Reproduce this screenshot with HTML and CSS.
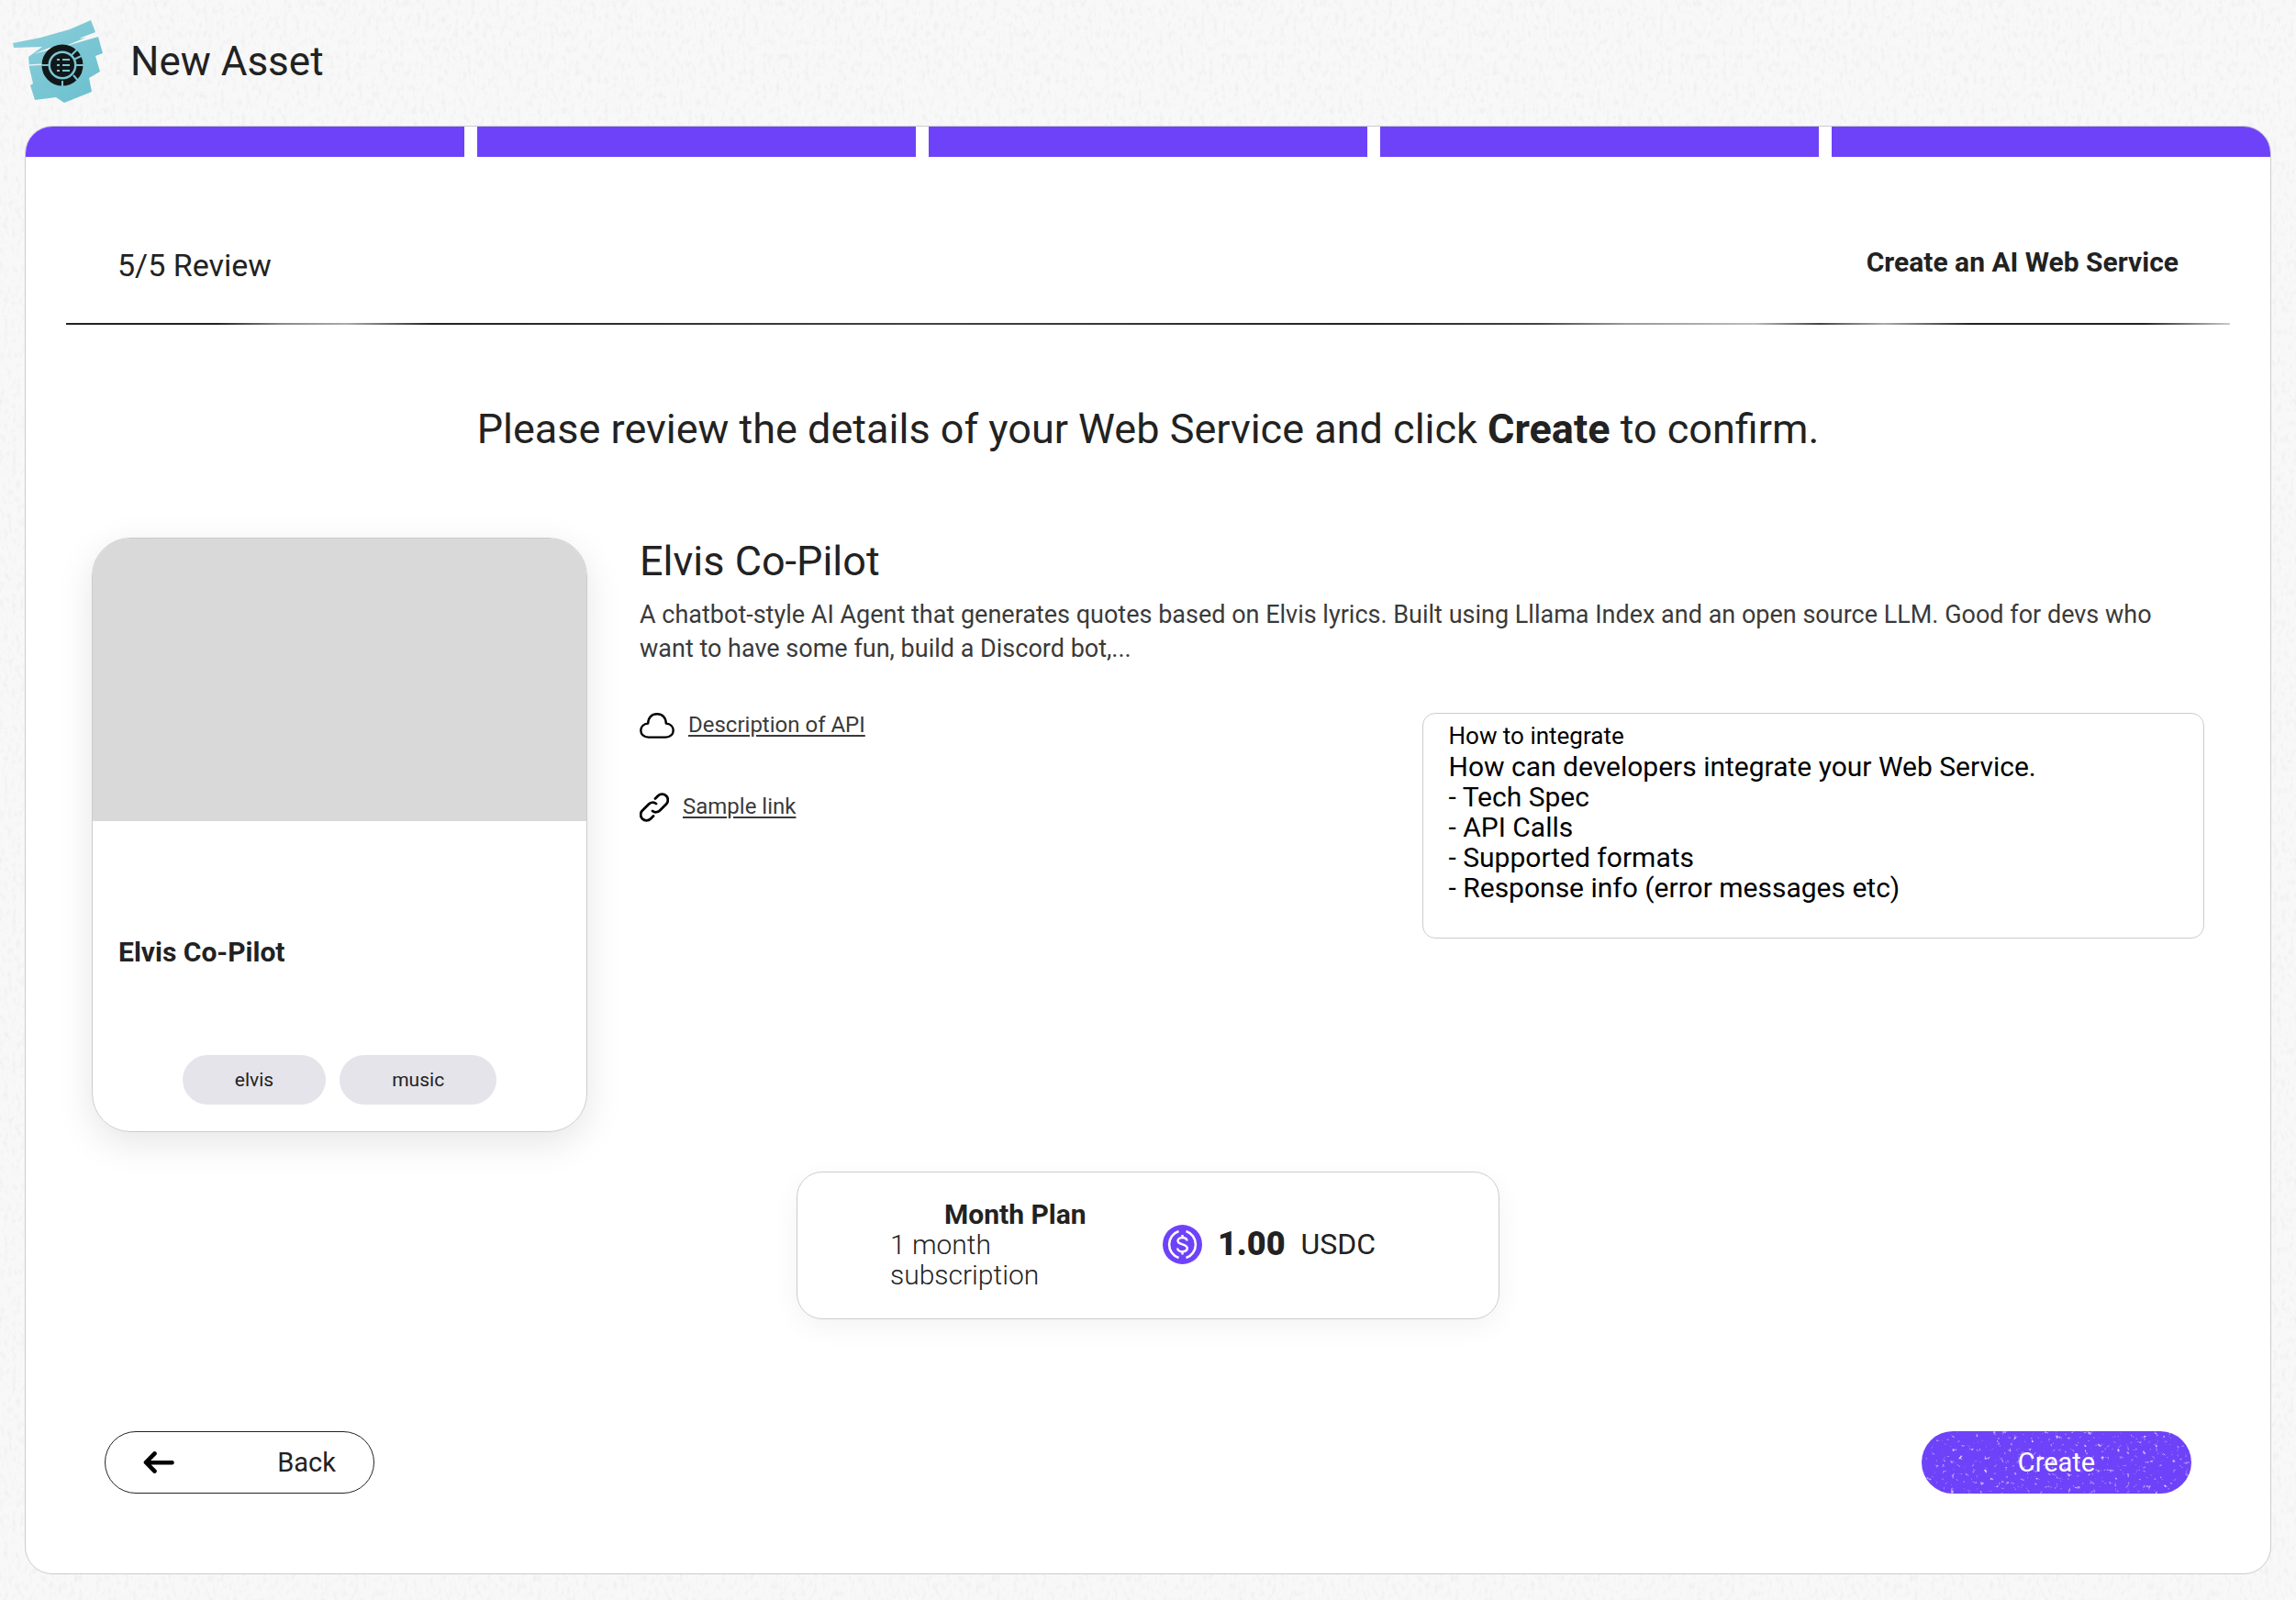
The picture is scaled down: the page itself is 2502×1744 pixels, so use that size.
FILE: index.html
```html
<!DOCTYPE html>
<html lang="en">
<head>
<meta charset="utf-8">
<meta name="viewport" content="width=device-width, initial-scale=1">
<title>New Asset</title>
<link rel="stylesheet" href="styles.css">
</head>
<body>
<header class="page-header">
  <svg class="brand" viewBox="0 0 98 90" aria-hidden="true">
    <defs>
      <linearGradient id="paint" x1="0" y1="0" x2="1" y2="1">
        <stop offset="0" stop-color="#8fd0dc"/>
        <stop offset="1" stop-color="#69bfcd"/>
      </linearGradient>
    </defs>
    <path fill="url(#paint)" d="M0 25 L30 19 L62 10 L85 0 L90 13 L72 20 L93 18 L98 36 L90 39 L95 56 L83 63 L86 78 L56 90 L47 84 L24 87 L19 71 L22 69 L18 52 L17 40 L32 29 L1 30 Z"/>
    <path fill="#f7f7f7" d="M60 27L94 13L93 18L62 27L40 30L22 37Z"/>
    <path stroke="#e3f2f4" stroke-width="1.500" fill="none" d="M18 49L34 48"/>
    <circle cx="54" cy="49" r="19" fill="none" stroke="#11181a" stroke-width="7"/>
    <path stroke="#79c5d2" stroke-width="2" d="M31 49h8M69 49h9M54 66v8M64 38l9-9M66 43l11-5M66 60l6 7"/>
    <circle cx="54" cy="49" r="13" fill="#11181a"/>
    <path stroke="#79c5d2" stroke-width="2" fill="none" d="M48 43h3M54 43h8M48 49h3M54 49h8M48 55h3M54 55h8"/>
  </svg>
  <h1 class="page-title">New Asset</h1>
</header>

<main class="panel">
  <div class="progress" role="progressbar" aria-label="Step" aria-valuemin="1" aria-valuemax="5" aria-valuenow="5">
    <span class="progress-step"></span>
    <span class="progress-step"></span>
    <span class="progress-step"></span>
    <span class="progress-step"></span>
    <span class="progress-step"></span>
  </div>

  <div class="step-bar">
    <p class="step-name">5/5 Review</p>
    <p class="step-flow">Create an AI Web Service</p>
  </div>

  <h2 class="prompt">Please review the details of your Web Service and click <strong>Create</strong> to confirm.</h2>

  <section class="review">
    <article class="asset-card">
      <div class="asset-image"></div>
      <h3 class="asset-name">Elvis Co-Pilot</h3>
      <ul class="tags">
        <li class="tag">elvis</li>
        <li class="tag">music</li>
      </ul>
    </article>

    <div class="details">
      <h3 class="details-title">Elvis Co-Pilot</h3>
      <p class="details-text">A chatbot-style AI Agent that generates quotes based on Elvis lyrics. Built using Lllama Index and an open source LLM. Good for devs who want to have some fun, build a Discord bot,...</p>
      <div class="details-columns">
        <ul class="links">
          <li class="link-row">
            <svg class="icon-cloud" viewBox="0 0 38 28" aria-hidden="true">
              <path fill="none" stroke="#000" stroke-width="2.400" stroke-linejoin="round" d="M9.500 26.600C4.600 26.600 1.300 23.300 1.300 19.200C1.300 15.200 4.300 12 9.200 11.600C9.200 5.500 13 1.300 19 1.300S28.800 5.500 28.800 11.600C33.700 12 36.700 15.200 36.700 19.200C36.700 23.300 33.400 26.600 28.500 26.600Z"/>
            </svg>
            <a class="link" href="#api">Description of API</a>
          </li>
          <li class="link-row">
            <svg class="icon-chain" viewBox="0 0 32 32" fill="none" stroke="#000" stroke-width="2.800" stroke-linecap="round" aria-hidden="true">
              <path d="M17 6.500l3-3a6.200 6.200 0 0 1 9 9l-7 7a6.200 6.200 0 0 1-8 .5"/>
              <path d="M15 25.500l-3 3a6.200 6.200 0 0 1-9-9l7-7a6.200 6.200 0 0 1 8-.5"/>
            </svg>
            <a class="link" href="#sample">Sample link</a>
          </li>
        </ul>
        <section class="integrate">
          <h4 class="integrate-title">How to integrate</h4>
          <p class="integrate-text">How can developers integrate your Web Service.
- Tech Spec
- API Calls
- Supported formats
- Response info (error messages etc)</p>
        </section>
      </div>
    </div>
  </section>

  <section class="plan">
    <div class="plan-info">
      <h3 class="plan-name">Month Plan</h3>
      <p class="plan-text">1 month subscription</p>
    </div>
    <div class="price">
      <svg class="icon-coin" viewBox="0 0 43 43" aria-hidden="true">
        <circle cx="21.500" cy="21.500" r="21.500" fill="#6e42f9"/>
        <g fill="none" stroke="#fff" stroke-width="2.600">
          <path d="M17.500 7A15.300 15.300 0 0 0 17.500 36"/>
          <path d="M25.500 7A15.300 15.300 0 0 1 25.500 36"/>
          <path stroke-width="2.400" d="M26.500 17.500C26.500 12.800 16.500 13 16.500 17.500C16.500 22.500 26.800 20.200 26.800 25.600C26.800 30.600 16.200 30.400 16.200 25.400M21.500 11v3.500M21.500 29v3.500"/>
        </g>
      </svg>
      <span class="price-value">1.00</span>
      <span class="price-unit">USDC</span>
    </div>
  </section>

  <div class="actions">
    <button class="button button-back" type="button">
      <svg class="icon-arrow" viewBox="0 0 34 24" aria-hidden="true">
        <path fill="none" stroke="#000" stroke-width="4.600" stroke-linecap="round" stroke-linejoin="round" d="M31.500 12.200L3 12M12.500 2.400L3 12L12.500 21.600"/>
      </svg>
      <span>Back</span>
    </button>
    <button class="button button-create" type="button">Create</button>
  </div>
</main>
</body>
</html>
```
FILE: styles.css
```css
* {
  box-sizing: border-box;
}

body {
  display: flex;
  flex-direction: column;
  min-height: 100vh;
  margin: 0;
  padding: 0 27px 28px;
  background-color: #f8f8f8;
  background-image: url("data:image/svg+xml,%3Csvg xmlns='http://www.w3.org/2000/svg' width='500' height='500'%3E%3Cfilter id='n' x='0' y='0' width='100%25' height='100%25'%3E%3CfeTurbulence type='fractalNoise' baseFrequency='.22 .12' numOctaves='3' seed='4' stitchTiles='stitch'/%3E%3CfeColorMatrix values='0 0 0 0 .5 0 0 0 0 .5 0 0 0 0 .5 .4 0 0 0 -.2'/%3E%3C/filter%3E%3Crect width='500' height='500' filter='url(%23n)'/%3E%3C/svg%3E");
  color: #222;
  font-family: Roboto, "Liberation Sans", sans-serif;
  font-size: 30px;
  line-height: 33px;
}

h1, h2, h3, h4, p, ul {
  margin: 0;
  padding: 0;
  font-size: inherit;
  font-weight: 400;
}

ul {
  list-style: none;
}

svg {
  display: block;
  flex: none;
}

.page-header {
  display: flex;
  align-items: center;
  gap: 30px;
  height: 137px;
  margin-left: -13px;
  padding-bottom: 3px;
}

.brand {
  width: 98px;
  height: 90px;
}

.page-title {
  font-size: 44px;
  line-height: 52px;
}

.details-title,
.prompt {
  font-size: 45px;
  line-height: 52px;
}

.panel {
  display: flex;
  flex: 1;
  flex-direction: column;
  overflow: hidden;
  border: 1px solid #ccc;
  border-radius: 30px;
  background: #fff;
}

.progress {
  display: grid;
  grid-template-columns: repeat(5, 1fr);
  gap: 14px;
}

.progress-step {
  height: 33px;
  background: #6e42f9;
}

.step-bar {
  display: flex;
  align-items: flex-start;
  justify-content: space-between;
  margin: 54px 44px 0;
  padding: 44px 56px 43px;
  border-bottom: 2px solid;
  border-image: linear-gradient(90deg, #222 7%, #888 10%, #aaa 13%, #222 17%, #444 40%, #222 60%, #444 68%, #999 72%, #bbb 78%, #444 81%, #aaa 84%, #222 88%, #222 96%, #ccc 100%) 1;
}

.step-name {
  font-size: 34px;
  line-height: 40px;
}

.step-flow {
  font-weight: 700;
}

.prompt {
  margin: 88px 72px 0;
  text-align: center;
}

.prompt strong {
  font-weight: 700;
}

.review {
  display: grid;
  grid-template-columns: 540px 1fr;
  gap: 57px;
  margin: 92px 72px 0;
}

.asset-card {
  display: flex;
  flex-direction: column;
  height: 648px;
  overflow: hidden;
  border: 1px solid #ccc;
  border-radius: 42px;
  box-shadow: 0 12px 40px rgba(0, 0, 0, .1);
}

.asset-image {
  height: 308px;
  background: #d9d9d9;
}

.asset-name {
  margin: 126px 28px auto;
  font-weight: 700;
}

.tags {
  display: flex;
  justify-content: center;
  gap: 15px;
  padding-bottom: 29px;
}

.tag {
  padding: 0 57px;
  border-radius: 27px;
  background: #e5e4eb;
  font-size: 21px;
  line-height: 54px;
}

.details-text {
  margin-top: 14px;
  color: #3a3a3a;
  font-size: 27px;
  line-height: 37px;
}

.details-columns {
  display: grid;
  grid-template-columns: 1fr 1fr;
  margin-top: 51px;
}

.links {
  display: flex;
  flex-direction: column;
  gap: 56px;
  margin-top: -3px;
}

.link-row {
  display: flex;
  align-items: center;
  gap: 15px;
}

.icon-cloud {
  width: 38px;
  height: 28px;
}

.icon-chain {
  width: 32px;
  height: 32px;
}

.link {
  color: #3a3a3a;
  font-size: 24px;
  text-underline-offset: 3px;
}

.integrate {
  min-height: 246px;
  padding: 8px 28px;
  border: 1px solid #ccc;
  border-radius: 14px;
  color: #000;
}

.integrate-title {
  font-size: 26px;
}

.integrate-text {
  white-space: pre-line;
}

.plan {
  display: grid;
  grid-template-columns: 196px auto;
  align-items: center;
  align-self: center;
  justify-content: start;
  gap: 101px;
  width: 766px;
  min-height: 161px;
  margin-top: 43px;
  padding: 0 101px 2px;
  border: 1px solid #ccc;
  border-radius: 28px;
  box-shadow: 0 8px 30px rgba(0, 0, 0, .05);
}

.plan-name {
  padding-left: 59px;
  font-weight: 700;
  white-space: nowrap;
}

.plan-text {
  font-weight: 300;
}

.price {
  display: flex;
  align-items: center;
  gap: 17px;
}

.icon-coin {
  width: 43px;
  height: 43px;
}

.price-value {
  font-size: 36px;
  font-weight: 900;
}

.price-unit {
  font-size: 32px;
}

.actions {
  display: flex;
  justify-content: space-between;
  margin: auto 86px 87px;
}

.button {
  width: 294px;
  height: 68px;
  border: 1px solid #222;
  border-radius: 34px;
  background: #fff;
  color: #222;
  font: 400 29px/33px Roboto, "Liberation Sans", sans-serif;
  cursor: pointer;
}

.button-back {
  display: flex;
  align-items: center;
  justify-content: space-between;
  padding: 0 41px;
}

.icon-arrow {
  width: 34px;
  height: 24px;
}

.button-create {
  border: 0;
  background-color: #6e42f9;
  background-image: url("data:image/svg+xml,%3Csvg xmlns='http://www.w3.org/2000/svg' width='294' height='68'%3E%3Cfilter id='n' x='0' y='0' width='100%25' height='100%25'%3E%3CfeTurbulence type='fractalNoise' baseFrequency='.22' numOctaves='3' seed='8'/%3E%3CfeColorMatrix values='0 0 0 0 .85 0 0 0 0 .8 0 0 0 0 1 4 0 0 0 -2.6'/%3E%3C/filter%3E%3Crect width='294' height='68' filter='url(%23n)'/%3E%3C/svg%3E");
  color: #fff;
}
```
